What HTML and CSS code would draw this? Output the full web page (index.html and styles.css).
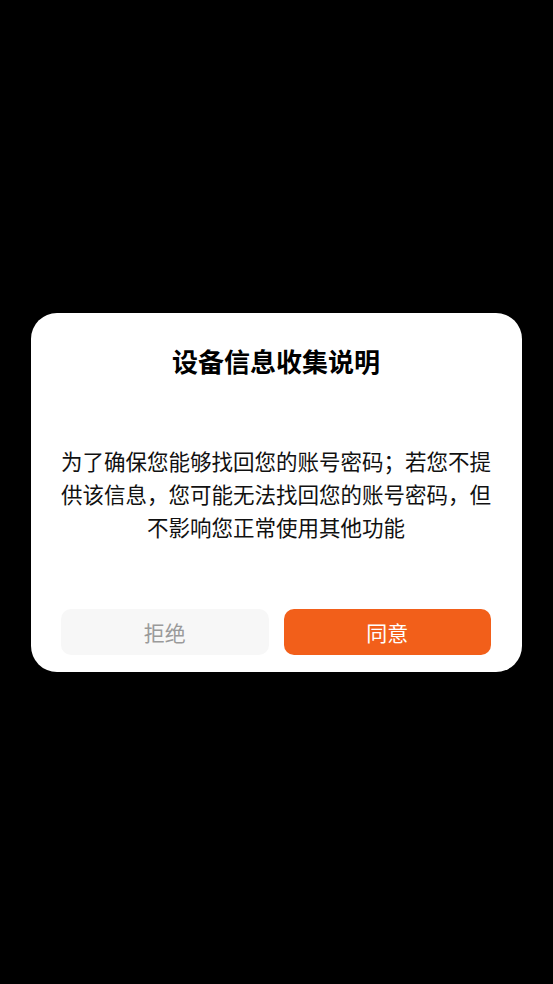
FILE: index.html
```html
<!DOCTYPE html>
<html lang="zh-CN">
<head>
  <meta charset="UTF-8">
  <meta name="viewport" content="width=device-width, initial-scale=1.0">
  <title>设备信息收集说明</title>
  <link rel="stylesheet" href="styles.css">
</head>
<body>
  <div class="mask">
    <div class="dialog">
      <div class="dialog-title">设备信息收集说明</div>
      <div class="dialog-content">为了确保您能够找回您的账号密码；若您不提供该信息，您可能无法找回您的账号密码，但不影响您正常使用其他功能</div>
      <div class="dialog-buttons">
        <div class="btn btn-refuse">拒绝</div>
        <div class="btn btn-agree">同意</div>
      </div>
    </div>
  </div>
</body>
</html>
```

FILE: styles.css
```css
html, body {
  margin: 0;
  padding: 0;
  width: 100%;
  height: 100%;
  overflow: hidden;
}
* {
  margin: 0;
  padding: 0;
  box-sizing: border-box;
}
body {
  background-color: #000;
  font-family: "Noto Sans CJK SC", "Noto Sans", sans-serif;
}
.mask {
  height: 100%;
  display: flex;
  align-items: center;
  justify-content: center;
}
.dialog {
  width: 491px;
  background-color: #fff;
  border-radius: 26px;
  padding: 30px 31px 17px 30px;
}
.dialog-title {
  font-size: 26px;
  font-weight: bold;
  line-height: 36px;
  text-align: center;
  color: #000;
}
.dialog-content {
  margin-top: 65px;
  font-size: 21.5px;
  line-height: 33px;
  text-align: center;
  color: #111;
}
.dialog-buttons {
  display: flex;
  gap: 15px;
  margin-top: 66px;
}
.btn {
  flex: 1;
  height: 46px;
  border-radius: 10px;
  display: flex;
  align-items: center;
  justify-content: center;
  font-size: 21px;
}
.btn-refuse {
  background-color: #f7f7f7;
  color: #9a9a9a;
}
.btn-agree {
  background-color: #f25f1a;
  color: #fff;
}
```
